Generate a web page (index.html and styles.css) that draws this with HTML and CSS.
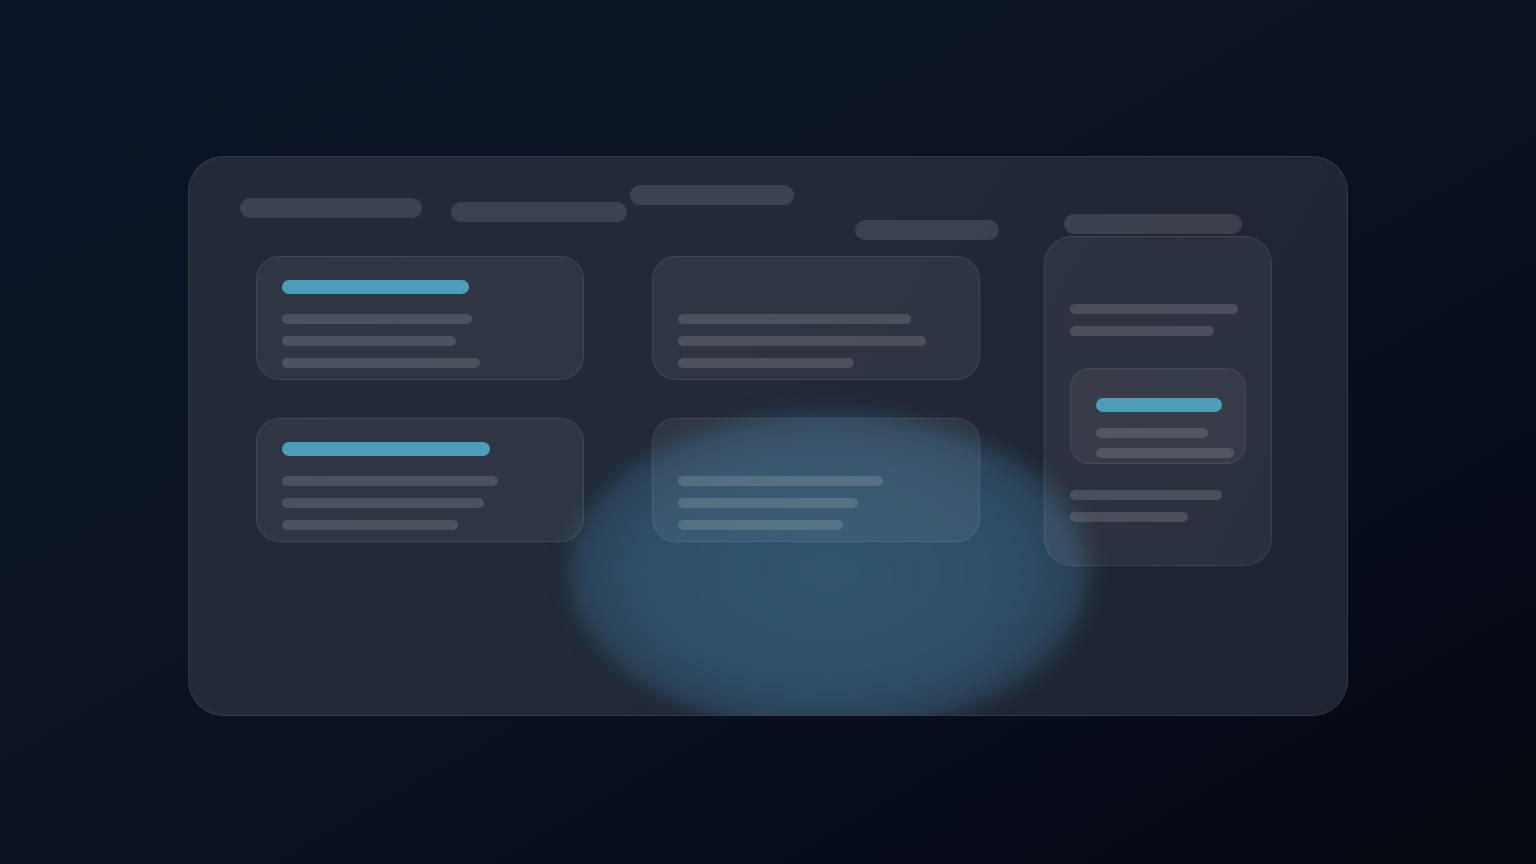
FILE: index.html
```html
<!DOCTYPE html>
<html lang="en">
<head>
<meta charset="utf-8">
<title>Skeleton board</title>
<link rel="stylesheet" href="styles.css">
</head>
<body>
<div class="stage">
  <div class="panel">
    <div class="glow"></div>
    <div class="header">
      <span class="pill pill-1"></span>
      <span class="pill pill-2"></span>
      <span class="pill pill-3"></span>
      <span class="pill pill-4"></span>
      <span class="pill pill-5"></span>
    </div>
    <div class="main">
      <div class="col col-a">
        <div class="card">
          <span class="bar accent" style="width:187px"></span>
          <span class="bar line" style="width:190px"></span>
          <span class="bar line" style="width:174px"></span>
          <span class="bar line" style="width:198px"></span>
        </div>
        <div class="card">
          <span class="bar accent" style="width:208px"></span>
          <span class="bar line" style="width:216px"></span>
          <span class="bar line" style="width:202px"></span>
          <span class="bar line" style="width:176px"></span>
        </div>
      </div>
      <div class="col col-b">
        <div class="card card-plain">
          <span class="bar line" style="width:233px"></span>
          <span class="bar line" style="width:248px"></span>
          <span class="bar line" style="width:176px"></span>
        </div>
        <div class="card card-plain">
          <span class="bar line" style="width:205px"></span>
          <span class="bar line" style="width:180px"></span>
          <span class="bar line" style="width:165px"></span>
        </div>
      </div>
      <div class="col col-c">
        <div class="side">
          <span class="bar line" style="width:168px"></span>
          <span class="bar line" style="width:144px"></span>
          <div class="inner">
            <span class="bar accent" style="width:126px"></span>
            <span class="bar line" style="width:112px"></span>
            <span class="bar line" style="width:138px"></span>
          </div>
          <span class="bar line" style="width:152px"></span>
          <span class="bar line" style="width:118px"></span>
        </div>
      </div>
    </div>
  </div>
</div>
</body>
</html>
```

FILE: styles.css
```css
* { box-sizing: border-box; }

html, body {
  margin: 0;
  padding: 0;
  width: 1536px;
  height: 864px;
  overflow: hidden;
  font-family: "Inter", "Liberation Sans", sans-serif;
}

body {
  background: linear-gradient(150deg, #0a1628 0%, #0b1324 40%, #0a0f1f 65%, #04070f 100%);
}

.stage {
  width: 1536px;
  height: 864px;
  display: flex;
  justify-content: center;
  padding-top: 156px;
}

.panel {
  position: relative;
  width: 1160px;
  height: 560px;
  border-radius: 36px;
  border: 1px solid rgba(255, 255, 255, 0.09);
  background: linear-gradient(120deg, #222a39 0%, #222937 45%, #1e2330 100%);
  overflow: hidden;
}

.glow {
  position: absolute;
  left: 380px;
  top: 255px;
  width: 520px;
  height: 320px;
  border-radius: 50%;
  background: radial-gradient(ellipse at center, rgba(52, 92, 120, 0.85) 0%, rgba(50, 88, 116, 0.8) 50%, rgba(48, 84, 112, 0.55) 72%, rgba(48, 84, 112, 0) 100%);
  filter: blur(10px);
}

.header {
  position: relative;
  z-index: 1;
  height: 79px;
  display: flex;
  align-items: flex-start;
  padding-left: 51px;
}

.pill {
  display: block;
  height: 20px;
  border-radius: 10px;
  background: rgba(255, 255, 255, 0.12);
}

.pill-1 { width: 182px; margin-top: 41px; }
.pill-2 { width: 176px; margin-top: 45px; margin-left: 29px; }
.pill-3 { width: 164px; margin-top: 28px; margin-left: 3px; }
.pill-4 { width: 144px; margin-top: 63px; margin-left: 61px; }
.pill-5 { width: 178px; margin-top: 57px; margin-left: 65px; }

.main {
  position: relative;
  z-index: 1;
  display: flex;
  align-items: flex-start;
  padding-left: 67px;
}

.col {
  display: flex;
  flex-direction: column;
  gap: 38px;
}

.col-a, .col-b {
  width: 328px;
  margin-top: 20px;
}

.col-b { margin-left: 68px; }
.col-c { margin-left: 64px; width: 228px; }

.card {
  height: 124px;
  border-radius: 24px;
  border: 1px solid rgba(255, 255, 255, 0.09);
  background: rgba(255, 255, 255, 0.06);
  padding: 23px 25px 0;
  display: flex;
  flex-direction: column;
  align-items: flex-start;
}

.card-plain { padding-top: 57px; }

.bar {
  display: block;
  border-radius: 7px;
  flex: none;
}

.accent {
  height: 14px;
  background: #4d9fb9;
  margin-bottom: 20px;
}

.line {
  height: 10px;
  border-radius: 5px;
  background: rgba(255, 255, 255, 0.14);
}

.card .line + .line { margin-top: 12px; }

.side {
  height: 330px;
  border-radius: 28px;
  border: 1px solid rgba(255, 255, 255, 0.09);
  background: rgba(255, 255, 255, 0.06);
  padding: 67px 25px 0;
  display: flex;
  flex-direction: column;
  align-items: flex-start;
}

.side > .line + .line { margin-top: 12px; }

.inner {
  width: 176px;
  height: 96px;
  margin: 32px 0 26px;
  border-radius: 20px;
  border: 1px solid rgba(255, 255, 255, 0.08);
  background: rgba(255, 255, 255, 0.05);
  padding: 29px 11px 0 25px;
  display: flex;
  flex-direction: column;
  align-items: flex-start;
}

.inner .accent { margin-bottom: 16px; }
.inner .line + .line { margin-top: 10px; }
```
